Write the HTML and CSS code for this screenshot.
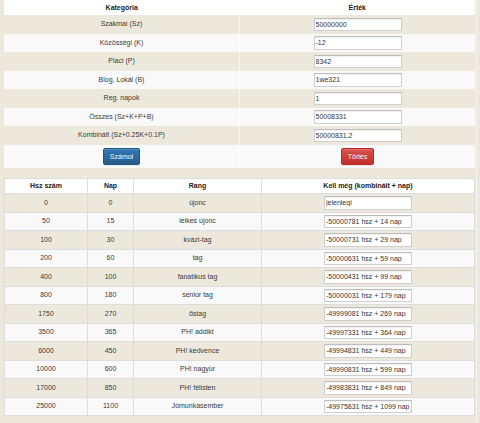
FILE: index.html
```html
<!DOCTYPE html>
<html lang="hu">
<head>
<meta charset="utf-8">
<title>Rang kalkulátor</title>
<link rel="stylesheet" href="styles.css">
</head>
<body>
<div class="page">
  <table class="calc">
    <thead>
      <tr><th class="c-cat">Kategória</th><th class="c-val">Érték</th></tr>
    </thead>
    <tbody>
      <tr><td>Szakmai (Sz)</td><td><input class="field" type="text" value="50000000"></td></tr>
      <tr><td>Közösségi (K)</td><td><input class="field" type="text" value="-12"></td></tr>
      <tr><td>Piaci (P)</td><td><input class="field" type="text" value="8342"></td></tr>
      <tr><td>Blog, Lokál (B)</td><td><input class="field" type="text" value="1we321"></td></tr>
      <tr><td>Reg. napok</td><td><input class="field" type="text" value="1"></td></tr>
      <tr><td>Összes (Sz+K+P+B)</td><td><input class="field" type="text" value="50008331"></td></tr>
      <tr><td>Kombinált (Sz+0.25K+0.1P)</td><td><input class="field" type="text" value="50000831.2"></td></tr>
      <tr class="btn-row"><td><button class="btn btn-primary" type="button">Számol</button></td><td><button class="btn btn-danger" type="button">Törlés</button></td></tr>
    </tbody>
  </table>

  <table class="ranks">
    <thead>
      <tr>
        <th class="r-hsz">Hsz szám</th>
        <th class="r-nap">Nap</th>
        <th class="r-rang">Rang</th>
        <th class="r-kell">Kell még (kombinált + nap)</th>
      </tr>
    </thead>
    <tbody>
      <tr><td>0</td><td>0</td><td>újonc</td><td><input class="field" type="text" value="jelenlegi"></td></tr>
      <tr><td>50</td><td>15</td><td>lelkes újonc</td><td><input class="field" type="text" value="-50000781 hsz + 14 nap"></td></tr>
      <tr><td>100</td><td>30</td><td>kvázi-tag</td><td><input class="field" type="text" value="-50000731 hsz + 29 nap"></td></tr>
      <tr><td>200</td><td>60</td><td>tag</td><td><input class="field" type="text" value="-50000631 hsz + 59 nap"></td></tr>
      <tr><td>400</td><td>100</td><td>fanatikus tag</td><td><input class="field" type="text" value="-50000431 hsz + 99 nap"></td></tr>
      <tr><td>800</td><td>180</td><td>senior tag</td><td><input class="field" type="text" value="-50000031 hsz + 179 nap"></td></tr>
      <tr><td>1750</td><td>270</td><td>őstag</td><td><input class="field" type="text" value="-49999081 hsz + 269 nap"></td></tr>
      <tr><td>3500</td><td>365</td><td>PH! addikt</td><td><input class="field" type="text" value="-49997331 hsz + 364 nap"></td></tr>
      <tr><td>6000</td><td>450</td><td>PH! kedvence</td><td><input class="field" type="text" value="-49994831 hsz + 449 nap"></td></tr>
      <tr><td>10000</td><td>600</td><td>PH! nagyúr</td><td><input class="field" type="text" value="-49990831 hsz + 599 nap"></td></tr>
      <tr><td>17000</td><td>850</td><td>PH! félisten</td><td><input class="field" type="text" value="-49983831 hsz + 849 nap"></td></tr>
      <tr><td>25000</td><td>1100</td><td>Jómunkásember</td><td><input class="field" type="text" value="-49975831 hsz + 1099 nap"></td></tr>
    </tbody>
  </table>
</div>
</body>
</html>
```

FILE: styles.css
```css
html, body {
  margin: 0;
  padding: 0;
  background: #ece9dc;
}

body {
  font-family: "Liberation Sans", Arial, sans-serif;
  font-size: 7px;
  line-height: 10px;
  color: #3a3a3a;
}

.page {
  width: 471px;
  margin-left: 4px;
  padding-right: 1px;
  border-right: 1px solid #f6f4ee;
  min-height: 423px;
}

table {
  border-collapse: collapse;
  width: 471px;
  table-layout: fixed;
}

th, td {
  padding: 2.5px 4px;
  text-align: center;
  vertical-align: middle;
  line-height: 10px;
}

th {
  font-weight: bold;
  background: #fff;
  color: #222;
}

tbody tr:nth-child(odd) td {
  background: #ece9dc;
}

tbody tr:nth-child(even) td {
  background: #f9f9f9;
}

/* top calculator table */
.calc {
  margin-bottom: 10.5px;
}

.c-cat,
.c-val {
  width: 50%;
}

.calc td + td {
  border-left: 1px solid rgba(255, 255, 255, 0.55);
}

.calc .btn-row td {
  padding-top: 3.5px;
  padding-bottom: 2.5px;
}

.field {
  display: inline-block;
  box-sizing: border-box;
  width: 88px;
  height: 13.5px;
  margin: 0;
  padding: 0 1px;
  border: 1px solid #cfcfcf;
  border-top-color: #bdbdbd;
  border-radius: 0;
  background: #fff;
  box-shadow: inset 0 1px 1px rgba(0, 0, 0, 0.06);
  font-family: "Liberation Sans", Arial, sans-serif;
  font-size: 7px;
  line-height: 11px;
  color: #333;
  vertical-align: middle;
}

.btn {
  display: inline-block;
  box-sizing: border-box;
  height: 17px;
  margin: 0;
  padding: 3px 6px;
  border: 1px solid transparent;
  border-radius: 2px;
  font-family: "Liberation Sans", Arial, sans-serif;
  font-size: 7px;
  line-height: 10px;
  color: #fff;
  text-shadow: 0 -1px 0 rgba(0, 0, 0, 0.2);
  box-shadow: inset 0 1px 0 rgba(255, 255, 255, 0.15), 0 1px 1px rgba(0, 0, 0, 0.075);
  vertical-align: middle;
}

.btn-primary {
  background: linear-gradient(to bottom, #337ab7 0%, #265a88 100%);
  border-color: #245580;
}

.btn-danger {
  background: linear-gradient(to bottom, #d9534f 0%, #c12e2a 100%);
  border-color: #b92c28;
}

/* ranks table */
.ranks th,
.ranks td {
  border: 1px solid #dddddd;
  padding: 2px 4px;
}

.r-hsz { width: 74px; }
.r-nap { width: 37px; }
.r-rang { width: 119px; }
.r-kell { width: auto; }
```
